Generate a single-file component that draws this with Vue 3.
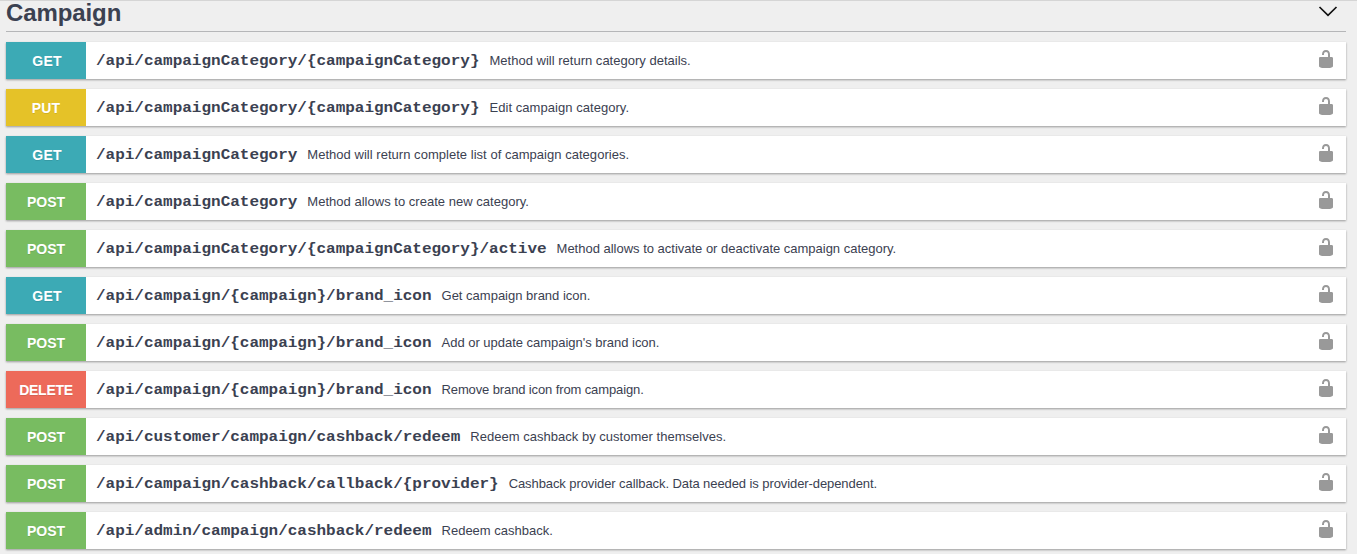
<script setup>
const operations = [
  { method: 'GET', path: '/api/campaignCategory/{campaignCategory}', text: 'Method will return category details.', tracking: 0.01 },
  { method: 'PUT', path: '/api/campaignCategory/{campaignCategory}', text: 'Edit campaign category.', tracking: 0.05 },
  { method: 'GET', path: '/api/campaignCategory', text: 'Method will return complete list of campaign categories.', tracking: 0.03 },
  { method: 'POST', path: '/api/campaignCategory', text: 'Method allows to create new category.', tracking: 0.02 },
  { method: 'POST', path: '/api/campaignCategory/{campaignCategory}/active', text: 'Method allows to activate or deactivate campaign category.', tracking: -0.01 },
  { method: 'GET', path: '/api/campaign/{campaign}/brand_icon', text: 'Get campaign brand icon.', tracking: 0 },
  { method: 'POST', path: '/api/campaign/{campaign}/brand_icon', text: "Add or update campaign's brand icon.", tracking: -0.02 },
  { method: 'DELETE', path: '/api/campaign/{campaign}/brand_icon', text: 'Remove brand icon from campaign.', tracking: -0.12 },
  { method: 'POST', path: '/api/customer/campaign/cashback/redeem', text: 'Redeem cashback by customer themselves.', tracking: 0.02 },
  { method: 'POST', path: '/api/campaign/cashback/callback/{provider}', text: 'Cashback provider callback. Data needed is provider-dependent.', tracking: -0.085 },
  { method: 'POST', path: '/api/admin/campaign/cashback/redeem', text: 'Redeem cashback.', tracking: 0 },
]
</script>

<template>
  <main class="page">
    <header class="tag">
      <h2>Campaign</h2>
      <svg class="chevron" width="20" height="20" viewBox="0 0 20 20" aria-hidden="true">
        <path d="M1.5 6 L10 14.3 L18.5 6" />
      </svg>
    </header>
    <section class="list">
      <div v-for="(op, i) in operations" :key="i" class="row">
        <span class="method" :class="op.method.toLowerCase()">{{ op.method }}</span>
        <span class="path">{{ op.path }}</span>
        <span class="text" :style="{ letterSpacing: op.tracking + 'px' }">{{ op.text }}</span>
        <svg class="lock" width="20" height="20" viewBox="0 0 20 20" aria-hidden="true">
          <path d="M15.8 8H14V5.6C14 2.703 12.665 1 10 1 7.334 1 6 2.703 6 5.6V6h2v-.801C8 3.754 8.797 3 10 3c1.203 0 2 .754 2 2.199V8H4c-.553 0-1 .646-1 1.199V17c0 .549.428 1.139.951 1.307l1.197.387C5.672 18.861 6.55 19 7.1 19h5.8c.549 0 1.428-.139 1.951-.307l1.196-.387c.524-.167.953-.757.953-1.306V9.199C17 8.646 16.352 8 15.8 8z" />
        </svg>
      </div>
    </section>
  </main>
</template>

<style>
body {
  background: #efefef;
  overflow: hidden;
}
</style>

<style scoped>
.page {
  box-sizing: border-box;
  height: 554px;
  overflow: hidden;
  padding: 0 11px 0 6px;
  border-top: 1px solid #d5d5d5;
  background: #efefef;
  color: #3b4151;
  font-family: "Liberation Sans", Arial, sans-serif;
}
.tag {
  box-sizing: border-box;
  height: 31px;
  display: flex;
  align-items: flex-start;
  justify-content: space-between;
  border-bottom: 1px solid #b5b6b8;
}
h2 {
  margin: -2px 0 0;
  font-size: 24px;
  line-height: 28px;
  font-weight: bold;
  letter-spacing: -0.1px;
}
.chevron {
  margin: 0 8px 0 0;
}
.chevron path {
  fill: none;
  stroke: #111;
  stroke-width: 1.7;
}
.list {
  display: flex;
  flex-direction: column;
  gap: 10px;
  padding-top: 10px;
}
.row {
  height: 37px;
  flex: none;
  display: flex;
  align-items: center;
  background: #fff;
  box-shadow: 0 1px 2px rgba(0, 0, 0, 0.36);
  white-space: nowrap;
}
.method {
  box-sizing: border-box;
  width: 80px;
  height: 37px;
  line-height: 38px;
  text-align: center;
  color: #fff;
  font-size: 14px;
  font-weight: bold;
  text-shadow: 0 1px 0 rgba(0, 0, 0, 0.1);
}
.get { background: #3caab5; padding-left: 2px; letter-spacing: 0.2px; }
.put { background: #e5c228; letter-spacing: 0.2px; }
.post { background: #78bc61; }
.delete { background: #ed6a5a; letter-spacing: -0.25px; }
.path {
  margin-left: 10px;
  font: bold 16px/18px "Liberation Mono", "Courier New", monospace;
  letter-spacing: -0.015px;
  transform: scaleY(0.88);
}
.text {
  margin-left: 10px;
  font-size: 13px;
  line-height: 18px;
}
.lock {
  margin: 0 10px 3px auto;
  fill: #999;
}
</style>
